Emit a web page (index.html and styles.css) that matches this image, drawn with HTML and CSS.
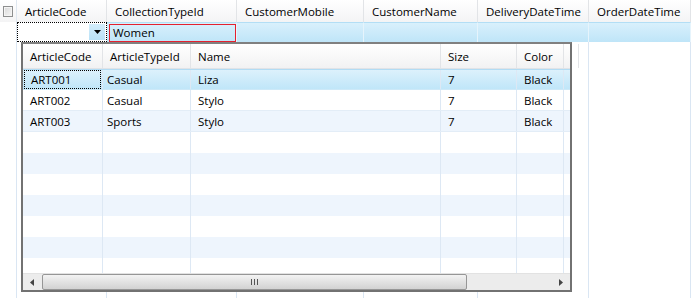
FILE: index.html
```html
<!DOCTYPE html>
<html lang="en">

<head>
  <meta charset="UTF-8" />
  <meta name="viewport" content="width=device-width, initial-scale=1" />
  <title>Orders grid</title>
  <link rel="stylesheet" href="styles.css">
</head>

<body>
  <div class="grid">
    <!-- header row -->
    <div class="head-cell selector"><span class="check"></span></div>
    <div class="head-cell">ArticleCode</div>
    <div class="head-cell">CollectionTypeId</div>
    <div class="head-cell">CustomerMobile</div>
    <div class="head-cell">CustomerName</div>
    <div class="head-cell">DeliveryDateTime</div>
    <div class="head-cell">OrderDateTime</div>

    <!-- row being edited -->
    <div class="edit-cell selector"></div>
    <div class="edit-cell combo">
      <span class="drop-button">
        <svg width="7" height="4" viewBox="0 0 7 4"><path d="M0 0h7L3.5 4z" fill="#000" /></svg>
      </span>
    </div>
    <div class="edit-cell"><span class="editor">Women</span></div>
    <div class="edit-cell"></div>
    <div class="edit-cell"></div>
    <div class="edit-cell"></div>
    <div class="edit-cell"></div>

    <!-- empty body -->
    <div class="body-cell"></div>
    <div class="body-cell"></div>
    <div class="body-cell"></div>
    <div class="body-cell"></div>
    <div class="body-cell"></div>
    <div class="body-cell"></div>
    <div class="body-cell"></div>

    <!-- dropdown of the ArticleCode combo -->
    <div class="popup">
      <div class="popup-head">
        <div class="p-cell">ArticleCode</div>
        <div class="p-cell">ArticleTypeId</div>
        <div class="p-cell">Name</div>
        <div class="p-cell">Size</div>
        <div class="p-cell">Color</div>
        <div class="p-cell"></div>
      </div>

      <div class="popup-rows">
        <div class="p-row selected data">
          <div class="p-cell"><span class="focus">ART001</span></div>
          <div class="p-cell tight">Casual</div>
          <div class="p-cell">Liza</div>
          <div class="p-cell">7</div>
          <div class="p-cell">Black</div>
          <div class="p-cell"></div>
        </div>
        <div class="p-row data">
          <div class="p-cell">ART002</div>
          <div class="p-cell tight">Casual</div>
          <div class="p-cell">Stylo</div>
          <div class="p-cell">7</div>
          <div class="p-cell">Black</div>
          <div class="p-cell"></div>
        </div>
        <div class="p-row alt data">
          <div class="p-cell">ART003</div>
          <div class="p-cell tight">Sports</div>
          <div class="p-cell">Stylo</div>
          <div class="p-cell">7</div>
          <div class="p-cell">Black</div>
          <div class="p-cell"></div>
        </div>
        <div class="p-row"><div class="p-cell"></div><div class="p-cell"></div><div class="p-cell"></div><div class="p-cell"></div><div class="p-cell"></div><div class="p-cell"></div></div>
        <div class="p-row alt"><div class="p-cell"></div><div class="p-cell"></div><div class="p-cell"></div><div class="p-cell"></div><div class="p-cell"></div><div class="p-cell"></div></div>
        <div class="p-row"><div class="p-cell"></div><div class="p-cell"></div><div class="p-cell"></div><div class="p-cell"></div><div class="p-cell"></div><div class="p-cell"></div></div>
        <div class="p-row alt"><div class="p-cell"></div><div class="p-cell"></div><div class="p-cell"></div><div class="p-cell"></div><div class="p-cell"></div><div class="p-cell"></div></div>
        <div class="p-row"><div class="p-cell"></div><div class="p-cell"></div><div class="p-cell"></div><div class="p-cell"></div><div class="p-cell"></div><div class="p-cell"></div></div>
        <div class="p-row alt"><div class="p-cell"></div><div class="p-cell"></div><div class="p-cell"></div><div class="p-cell"></div><div class="p-cell"></div><div class="p-cell"></div></div>
        <div class="p-row"><div class="p-cell"></div><div class="p-cell"></div><div class="p-cell"></div><div class="p-cell"></div><div class="p-cell"></div><div class="p-cell"></div></div>
      </div>

      <div class="h-scroll">
        <span class="scroll-arrow">
          <svg width="4" height="7" viewBox="0 0 4 7"><path d="M4 0v7L0 3.5z" fill="#444" /></svg>
        </span>
        <span class="thumb"><span class="grip"></span></span>
        <span class="track"></span>
        <span class="scroll-arrow">
          <svg width="4" height="7" viewBox="0 0 4 7"><path d="M0 0v7L4 3.5z" fill="#444" /></svg>
        </span>
      </div>
    </div>
  </div>
</body>

</html>
```

FILE: styles.css
```css
* {
  box-sizing: border-box;
}

body {
  margin: 0;
  font-family: 'Open Sans', 'Noto Sans', sans-serif;
  font-size: 11.5px;
  color: #000;
  background: #fff;
}

.grid {
  position: relative;
  width: 691px;
  height: 298px;
  display: grid;
  grid-template-columns: 17px 90px 130px 127px 114px 111px 102px;
  grid-template-rows: 22px 20px 1fr;
  overflow: hidden;
}

.head-cell {
  display: flex;
  align-items: center;
  padding: 0 8px;
  white-space: nowrap;
  background: linear-gradient(#ffffff, #f4f4f5);
  border-right: 1px solid #e2e4e7;
}

.head-cell.selector {
  padding: 0 3px;
  border-right: 1px solid #dfe7f0;
}

.check {
  width: 11px;
  height: 11px;
  border: 1px solid #8e8f8f;
  background: linear-gradient(135deg, #d8d8d8, #f6f6f6);
  box-shadow: inset 0 0 0 1px #f4f4f4;
}

.edit-cell {
  display: flex;
  align-items: center;
  background: linear-gradient(#d9f0fc, #bfe5f8);
  border-top: 1px solid #b3def5;
  border-right: 1px solid #e6f4fc;
}

.edit-cell.selector {
  background: #fff;
  border-top: none;
  border-right: 1px solid #dfe7f0;
}

.edit-cell.combo {
  justify-content: flex-end;
  background: #fff;
  border: 1px dotted #000;
  padding: 1px 1px 1px 0;
}

.drop-button {
  width: 16px;
  height: 100%;
  display: flex;
  align-items: center;
  justify-content: center;
  background: linear-gradient(#d3edfb, #b9e1f7);
}

.editor {
  width: 128px;
  height: 18px;
  margin-left: 2px;
  padding: 0 3px;
  display: flex;
  align-items: center;
  border: 1px solid #e5202e;
}

.body-cell {
  border-right: 1px solid #dae6f3;
}

.popup {
  position: absolute;
  left: 21px;
  top: 42px;
  width: 551px;
  height: 250px;
  border: 2px solid #727272;
  border-top-color: #808080;
  background: #fff;
  display: flex;
  flex-direction: column;
}

.popup-head,
.p-row {
  display: grid;
  grid-template-columns: 80px 88px 250px 76px 47px 6px;
}

.popup-head {
  height: 25px;
  background: linear-gradient(#ffffff, #f2f2f3);
  border-bottom: 1px solid #e0e3e7;
}

.p-cell {
  display: flex;
  align-items: center;
  padding: 0 7px;
  white-space: nowrap;
  border-right: 1px solid #dde8f4;
}

.popup-head .p-cell {
  border-right-color: #e2e4e7;
}

.p-cell.tight {
  padding-left: 4px;
}

.popup-rows {
  flex: 1;
  overflow: hidden;
}

.p-row {
  height: 21px;
}

.p-row.data {
  border-bottom: 1px solid #e3edf7;
  height: 21px;
}

.p-row.alt {
  background: #eef5fd;
}

.p-row.selected {
  background: linear-gradient(#dcf1fc, #c0e6f9);
  border-top: 1px solid #b2dcf4;
  border-bottom: 1px solid #cde9f8;
}

.p-row.selected .p-cell:first-child {
  padding: 0 1px;
}

.focus {
  width: 100%;
  height: 100%;
  display: flex;
  align-items: center;
  padding: 0 6px;
  border: 1px dotted #000;
}

.h-scroll {
  height: 17px;
  display: flex;
  background: #ececec;
  border-top: 1px solid #e2e2e2;
}

.scroll-arrow {
  width: 18px;
  display: flex;
  align-items: center;
  justify-content: center;
}

.thumb {
  width: 425px;
  margin: 0 0 0 1px;
  border: 1px solid #969696;
  border-radius: 2px;
  background: linear-gradient(#f3f3f3, #e2e2e2 50%, #d2d2d2);
  display: flex;
  align-items: center;
  justify-content: center;
}

.grip {
  width: 7px;
  height: 6px;
  background: repeating-linear-gradient(90deg, #555 0 1px, transparent 1px 3px);
}

.track {
  flex: 1;
}
```
